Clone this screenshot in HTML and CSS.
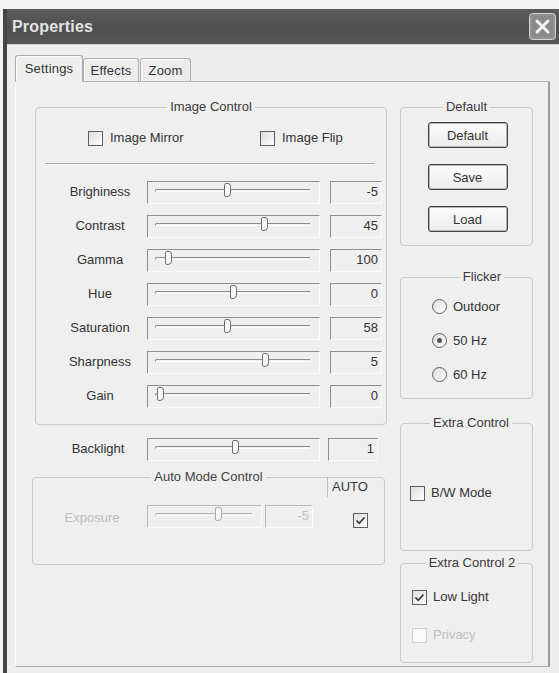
FILE: index.html
```
<!DOCTYPE html>
<html>
<head>
<meta charset="utf-8">
<link rel="stylesheet" href="styles.css">
</head>
<body>
<div class="window">
  <div class="titlebar">
    <span class="title">Properties</span>
    <span class="close">
      <svg width="27" height="27" viewBox="0 0 27 27"><rect x="0.5" y="0.5" width="26" height="26" rx="3" fill="#8a8a8a" stroke="#d4d4d4"/><rect x="2" y="2" width="23" height="23" rx="2" fill="none" stroke="#9c9c9c"/><path d="M8 8 L19 19 M19 8 L8 19" stroke="#f4f4f4" stroke-width="3" stroke-linecap="round"/></svg>
    </span>
  </div>
  <div class="content">
    <div class="tabs">
      <div class="tab active">Settings</div>
      <div class="tab t-effects">Effects</div>
      <div class="tab t-zoom">Zoom</div>
    </div>
    <div class="panel">
      <div class="leftcol">
        <fieldset class="group imgctl">
          <legend>Image Control</legend>
          <div class="checks">
            <label class="check"><span class="cb"></span>Image Mirror</label>
            <label class="check"><span class="cb"></span>Image Flip</label>
          </div>
          <div class="sep"></div>
          <div class="srow"><span class="slabel">Brighiness</span><div class="slider"><div class="groove"></div><div class="thumb" style="left:76px"></div></div><div class="val">-5</div></div>
          <div class="srow"><span class="slabel">Contrast</span><div class="slider"><div class="groove"></div><div class="thumb" style="left:113px"></div></div><div class="val">45</div></div>
          <div class="srow"><span class="slabel">Gamma</span><div class="slider"><div class="groove"></div><div class="thumb" style="left:17px"></div></div><div class="val">100</div></div>
          <div class="srow"><span class="slabel">Hue</span><div class="slider"><div class="groove"></div><div class="thumb" style="left:82px"></div></div><div class="val">0</div></div>
          <div class="srow"><span class="slabel">Saturation</span><div class="slider"><div class="groove"></div><div class="thumb" style="left:76px"></div></div><div class="val">58</div></div>
          <div class="srow"><span class="slabel">Sharpness</span><div class="slider"><div class="groove"></div><div class="thumb" style="left:114px"></div></div><div class="val">5</div></div>
          <div class="srow"><span class="slabel">Gain</span><div class="slider"><div class="groove"></div><div class="thumb" style="left:9px"></div></div><div class="val">0</div></div>
        </fieldset>
        <div class="srow backlight"><span class="slabel">Backlight</span><div class="slider"><div class="groove"></div><div class="thumb" style="left:84px"></div></div><div class="val">1</div></div>
        <fieldset class="group automode">
          <legend>Auto Mode Control</legend>
          <div class="autorow">
            <span class="slabel dis">Exposure</span>
            <div class="slider small dis"><div class="groove"></div><div class="thumb" style="left:67px"></div></div>
            <div class="val small dis">-5</div>
            <div class="autocol">
              <div class="autolbl">AUTO</div>
              <span class="cb on"><svg width="13" height="13" viewBox="0 0 13 13"><path d="M2.5 6.5 L5.2 9.3 L10.5 3.5" fill="none" stroke="#3a3a3a" stroke-width="1.8"/></svg></span>
            </div>
          </div>
        </fieldset>
      </div>
      <div class="rightcol">
        <fieldset class="group defgrp">
          <legend>Default</legend>
          <button class="btn">Default</button>
          <button class="btn">Save</button>
          <button class="btn">Load</button>
        </fieldset>
        <fieldset class="group flicker">
          <legend>Flicker</legend>
          <label class="radio"><span class="rb"></span>Outdoor</label>
          <label class="radio"><span class="rb on"></span>50 Hz</label>
          <label class="radio"><span class="rb"></span>60 Hz</label>
        </fieldset>
        <fieldset class="group extra">
          <legend>Extra Control</legend>
          <label class="check"><span class="cb"></span>B/W Mode</label>
        </fieldset>
        <fieldset class="group extra2">
          <legend>Extra Control 2</legend>
          <label class="check"><span class="cb on"><svg width="13" height="13" viewBox="0 0 13 13"><path d="M2.5 6.5 L5.2 9.3 L10.5 3.5" fill="none" stroke="#3a3a3a" stroke-width="1.8"/></svg></span>Low Light</label>
          <label class="check dis privacy"><span class="cb"></span>Privacy</label>
        </fieldset>
      </div>
    </div>
  </div>
</div>
</body>
</html>
```
FILE: styles.css
```
html, body {
  margin: 0;
  padding: 0;
  background: #f4f4f4;
  overflow: hidden;
}
body {
  width: 559px;
  height: 673px;
  font-family: "Liberation Sans", Arial, sans-serif;
  font-size: 13px;
  color: #333;
}
.window {
  margin: 9px 0 0 3px;
  width: 556px;
  height: 664px;
  box-sizing: border-box;
  border-left: 4px solid #454545;
  background: #eeeeee;
}
.titlebar {
  height: 36px;
  display: flex;
  align-items: center;
  justify-content: space-between;
  padding-left: 5px;
  background: linear-gradient(#5c5c5c, #4f4f4f 55%, #565656);
  border-bottom: 1px solid #cfcfcf;
  box-sizing: border-box;
}
.title {
  color: #e2e2e2;
  font-weight: bold;
  font-size: 16px;
  letter-spacing: 0.2px;
}
.close {
  display: flex;
  margin-right: 3px;
}
.content {
  padding-top: 10px;
}
.tabs {
  display: flex;
  align-items: flex-end;
  height: 26px;
  padding-left: 8px;
}
.tab {
  box-sizing: border-box;
  height: 23px;
  display: flex;
  align-items: center;
  justify-content: center;
  border: 1px solid #acacac;
  border-bottom: none;
  border-radius: 3px 3px 0 0;
  background: #ececec;
  box-shadow: inset 1px 1px 0 #fbfbfb;
  letter-spacing: 0.2px;
}
.tab.active {
  width: 68px;
  height: 27px;
  margin-bottom: -1px;
  background: #efefef;
  padding-bottom: 2px;
}
.t-effects { width: 56px; }
.t-zoom { width: 51px; margin-left: 1px; }
.panel {
  box-sizing: border-box;
  margin-left: 8px;
  width: 535px;
  height: 586px;
  border-top: 1px solid #b2b2b2;
  border-left: 1px solid #fdfdfd;
  border-right: 2px solid #9c9c9c;
  border-bottom: 1px solid #a8a8a8;
  background: #efefef;
  padding: 17px 15px 0 16px;
  display: flex;
  gap: 12px;
  align-items: flex-start;
}
.leftcol { width: 356px; }
.rightcol { width: 133px; }
.group {
  margin: 0;
  padding: 0;
  min-width: 0;
  box-sizing: border-box;
  border: 1px solid #c9c9c9;
  border-radius: 4px;
}
.group > legend {
  margin: 0 auto;
  padding: 0 3px;
  line-height: 16px;
  font-size: 13px;
  color: #3a3a3a;
}
.imgctl {
  margin-left: 3px;
  width: 352px;
  padding: 15px 0 16px 0;
}
.checks {
  display: flex;
  padding-left: 52px;
  height: 16px;
}
.check {
  display: flex;
  align-items: center;
  gap: 7px;
  height: 16px;
  line-height: 16px;
}
.checks .check:first-child { width: 172px; }
.cb {
  box-sizing: border-box;
  width: 15px;
  height: 15px;
  flex: none;
  border: 1px solid #5e5e5e;
  background: linear-gradient(135deg, #dedede, #fdfdfd);
  display: flex;
  align-items: center;
  justify-content: center;
}
.sep {
  margin: 17px 11px 0 9px;
  border-top: 1px solid #a9a9a9;
  border-bottom: 1px solid #fbfbfb;
}
.srow {
  display: flex;
  height: 23px;
  margin-top: 11px;
}
.sep + .srow { margin-top: 16px; }
.slabel {
  width: 92px;
  margin-left: 18px;
  text-align: center;
  line-height: 22px;
  flex: none;
}
.slider {
  position: relative;
  box-sizing: border-box;
  width: 173px;
  height: 23px;
  margin-left: 1px;
  flex: none;
  border-top: 1px solid #8e8e8e;
  border-left: 1px solid #8e8e8e;
  border-right: 1px solid #fbfbfb;
  border-bottom: 1px solid #fbfbfb;
}
.groove {
  margin: 7px 9px 0 7px;
  height: 1px;
  border-top: 1px solid #8c8c8c;
  border-bottom: 1px solid #fdfdfd;
  border-left: 1px solid #8c8c8c;
  border-radius: 2px 0 0 0;
}
.thumb {
  position: absolute;
  top: 1px;
  width: 7px;
  height: 14px;
  box-sizing: border-box;
  border: 1px solid #707070;
  border-radius: 2px 3px 4px 2px;
  background: #f7f7f7;
}
.val {
  box-sizing: border-box;
  width: 52px;
  height: 23px;
  margin-left: 10px;
  flex: none;
  text-align: right;
  padding-right: 3px;
  line-height: 20px;
  border-top: 1px solid #8e8e8e;
  border-left: 1px solid #8e8e8e;
  border-right: 1px solid #fbfbfb;
  border-bottom: 1px solid #fbfbfb;
}
.backlight { margin-top: 13px; }
.backlight .slabel { margin-left: 20px; }
.backlight .slider { margin-left: 3px; }
.backlight .val { margin-left: 8px; width: 50px; }
.automode {
  width: 353px;
  margin-top: 8px;
  padding: 0 0 34px 0;
}
.automode > legend { color: #444; }
.autorow {
  display: flex;
  align-items: flex-start;
}
.autorow .slabel {
  margin-left: 13px;
  margin-top: 20px;
  line-height: 25px;
}
.autorow .slider {
  margin-left: 9px;
  margin-top: 20px;
  width: 115px;
}
.autorow .val {
  margin-left: 3px;
  margin-top: 20px;
  width: 48px;
}
.dis { color: #bdbdbd; }
.slider.dis, .val.dis {
  border-top-color: #b9b9b9;
  border-left-color: #b9b9b9;
}
.slider.dis .groove {
  border-top-color: #b5b5b5;
  border-left-color: #b5b5b5;
}
.slider.dis .thumb { border-color: #a9a9a9; }
.autocol {
  margin-left: 14px;
  margin-top: -8px;
  width: 46px;
}
.autolbl {
  height: 20px;
  line-height: 20px;
  border-left: 1px solid #bdbdbd;
  padding-left: 4px;
  color: #3a3a3a;
}
.autocol .cb {
  margin: 16px 0 0 26px;
}
.defgrp {
  padding: 7px 0 13px 0;
  display: flex;
  flex-direction: column;
  align-items: center;
  gap: 16px;
}
.btn {
  box-sizing: border-box;
  width: 80px;
  height: 26px;
  margin-left: 2px;
  font-family: inherit;
  font-size: 13px;
  color: #333;
  border: 1px solid #404040;
  border-radius: 3px;
  background: linear-gradient(#fcfcfc, #ececec);
  box-shadow: inset 0 0 0 1px #b8b8b8;
  padding: 0;
}
.flicker {
  margin-top: 23px;
  padding: 13px 0 16px 31px;
  display: flex;
  flex-direction: column;
  gap: 18px;
}
.radio {
  display: flex;
  align-items: center;
  gap: 6px;
  height: 16px;
}
.rb {
  box-sizing: border-box;
  width: 15px;
  height: 15px;
  flex: none;
  border-radius: 50%;
  border: 1px solid #5e5e5e;
  background: linear-gradient(135deg, #dcdcdc, #ffffff);
  display: flex;
  align-items: center;
  justify-content: center;
}
.rb.on::after {
  content: "";
  width: 5px;
  height: 5px;
  border-radius: 50%;
  background: #555;
}
.extra {
  margin-top: 16px;
  padding: 54px 0 49px 9px;
}
.extra .check { gap: 6px; }
.extra2 {
  margin-top: 4px;
  padding: 18px 0 19px 11px;
  display: flex;
  flex-direction: column;
  gap: 22px;
}
.extra2 .check { gap: 6px; }
.privacy .cb {
  border-color: #cfcfcf;
  background: #fafafa;
}
```
